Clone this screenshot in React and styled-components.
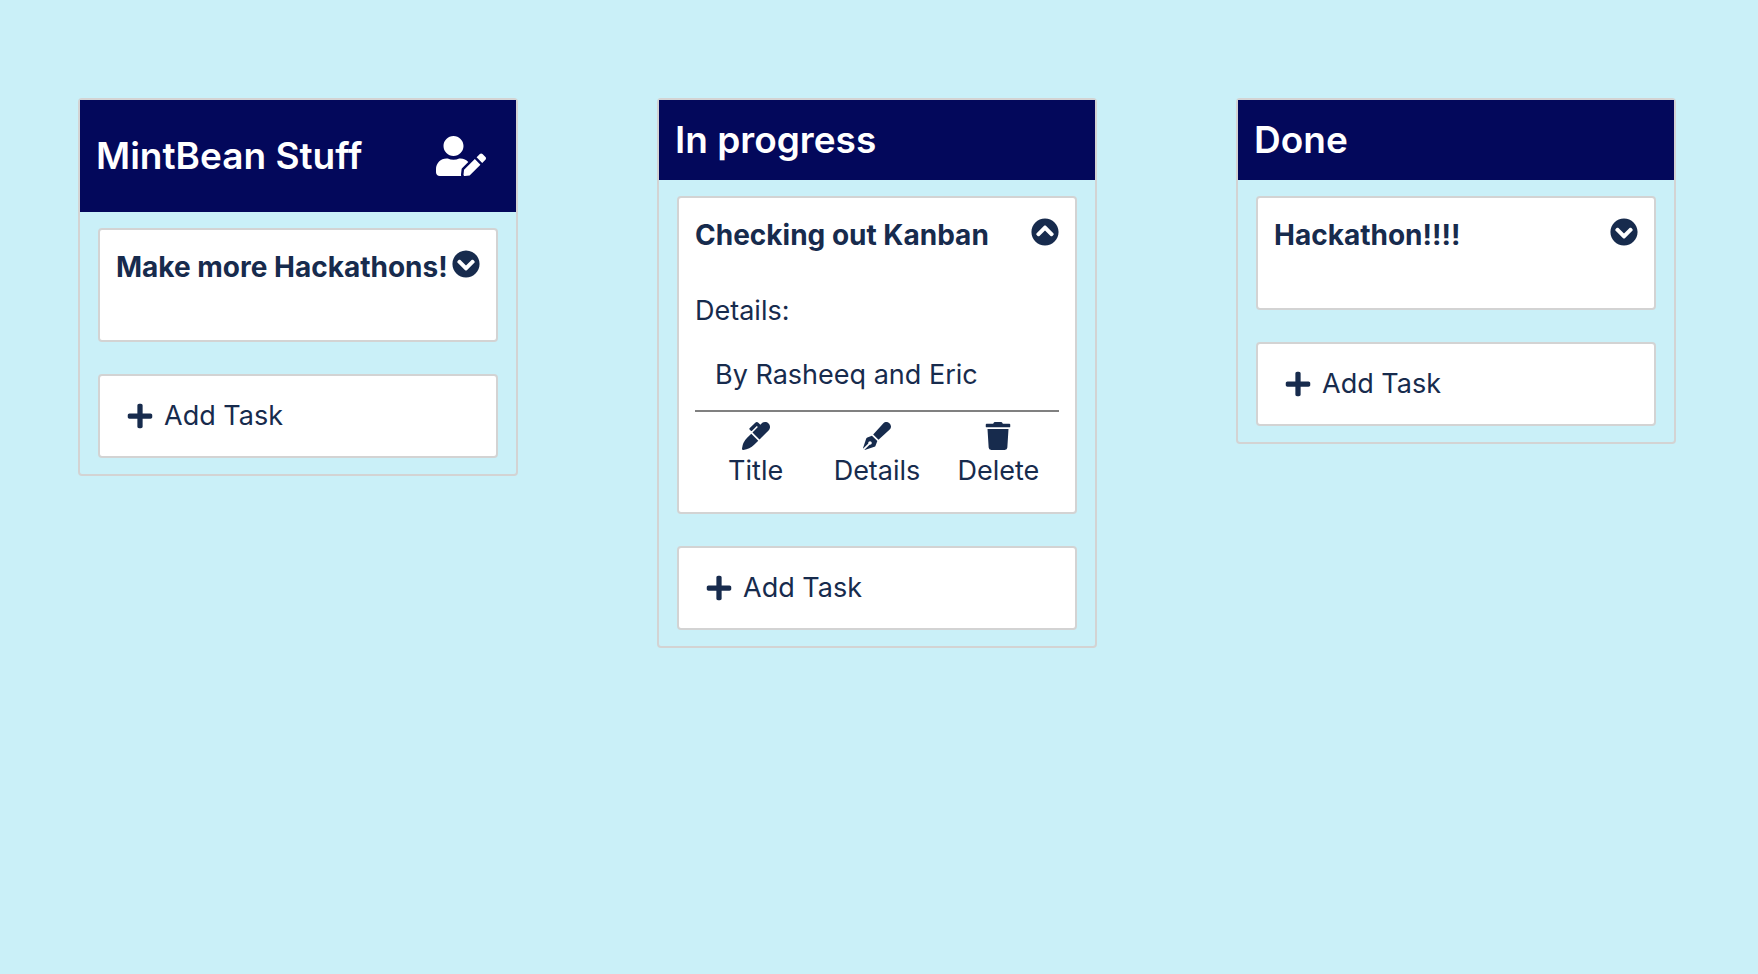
import React, { useState } from "react";
import styled, { createGlobalStyle } from "styled-components";
import {
  FaUserEdit,
  FaChevronCircleDown,
  FaChevronCircleUp,
  FaMarker,
  FaPenFancy,
  FaTrash,
  FaPlus,
} from "react-icons/fa";

const GlobalStyle = createGlobalStyle`
  *, *::before, *::after { box-sizing: border-box; }
  body {
    margin: 0;
    min-height: 100vh;
    background: #caf0f8;
    color: #172b4d;
    font-family: Inter, "Liberation Sans", sans-serif;
    font-size: 27px;
    line-height: 42px;
  }
  button {
    border: 0;
    padding: 0;
    background: none;
    color: inherit;
    font: inherit;
    cursor: pointer;
  }
  svg {
    display: block;
    width: 28px;
    height: 28px;
  }
`;

const Board = styled.main`
  display: flex;
  justify-content: space-between;
  align-items: flex-start;
  padding: 98px 82px 98px 78px;
`;

const Column = styled.section`
  flex: 0 1 440px;
  min-width: 0;
  border: 2px solid #d3d3d3;
  border-radius: 4px;
`;

const ColumnHeader = styled.header`
  display: flex;
  align-items: center;
  justify-content: space-between;
  padding: 16px;
  background: #03085b;
  color: #fff;
`;

const ColumnTitle = styled.h2`
  margin: 0;
  font-size: 37px;
  font-weight: 600;
  line-height: 48px;
`;

const EditUserButton = styled.button`
  padding: 20px 14px;

  svg {
    width: 50px;
    height: 40px;
  }
`;

const ColumnBody = styled.div`
  display: flex;
  flex-direction: column;
  gap: 32px;
  padding: 16px 18px;
`;

const Card = styled.article`
  min-height: 114px;
  padding: 16px;
  background: #fff;
  border: 2px solid #d3d3d3;
  border-radius: 4px;
`;

const CardHeader = styled.div`
  display: flex;
  align-items: flex-start;
  justify-content: space-between;
`;

const CardTitle = styled.h3`
  margin: 0;
  font-size: 28px;
  font-weight: 700;
  line-height: 42px;
  white-space: nowrap;
`;

const ToggleButton = styled.button`
  flex: none;
  padding: 4px 0;
`;

const DetailsLabel = styled.p`
  margin: 34px 0 22px;
`;

const DetailsText = styled.p`
  margin: 0;
  padding: 0 20px 14px;
`;

const CardActions = styled.div`
  display: grid;
  grid-template-columns: repeat(3, 1fr);
  padding: 10px 0 4px;
  border-top: 2px solid #808080;
`;

const ActionButton = styled.button`
  display: flex;
  flex-direction: column;
  align-items: center;
`;

const AddTaskButton = styled.button`
  display: flex;
  align-items: center;
  gap: 10px;
  min-height: 84px;
  padding: 18px 26px;
  background: #fff;
  border: 2px solid #d3d3d3;
  border-radius: 4px;
`;

function TaskCard({ title, details, initiallyOpen }) {
  const [open, setOpen] = useState(Boolean(initiallyOpen));
  return (
    <Card>
      <CardHeader>
        <CardTitle>{title}</CardTitle>
        <ToggleButton
          type="button"
          aria-expanded={open}
          aria-label="Toggle details"
          onClick={() => setOpen(!open)}
        >
          {open ? <FaChevronCircleUp /> : <FaChevronCircleDown />}
        </ToggleButton>
      </CardHeader>
      {open && (
        <>
          <DetailsLabel>Details:</DetailsLabel>
          <DetailsText>{details}</DetailsText>
          <CardActions>
            <ActionButton type="button">
              <FaMarker />
              Title
            </ActionButton>
            <ActionButton type="button">
              <FaPenFancy />
              Details
            </ActionButton>
            <ActionButton type="button">
              <FaTrash />
              Delete
            </ActionButton>
          </CardActions>
        </>
      )}
    </Card>
  );
}

const columns = [
  {
    title: "MintBean Stuff",
    editable: true,
    tasks: [{ title: "Make more Hackathons!" }],
  },
  {
    title: "In progress",
    tasks: [
      {
        title: "Checking out Kanban",
        details: "By Rasheeq and Eric",
        initiallyOpen: true,
      },
    ],
  },
  { title: "Done", tasks: [{ title: "Hackathon!!!!" }] },
];

export default function App() {
  return (
    <>
      <GlobalStyle />
      <Board>
        {columns.map((column) => (
          <Column key={column.title}>
            <ColumnHeader>
              <ColumnTitle>{column.title}</ColumnTitle>
              {column.editable && (
                <EditUserButton type="button" aria-label="Edit column">
                  <FaUserEdit />
                </EditUserButton>
              )}
            </ColumnHeader>
            <ColumnBody>
              {column.tasks.map((task) => (
                <TaskCard key={task.title} {...task} />
              ))}
              <AddTaskButton type="button">
                <FaPlus />
                Add Task
              </AddTaskButton>
            </ColumnBody>
          </Column>
        ))}
      </Board>
    </>
  );
}
